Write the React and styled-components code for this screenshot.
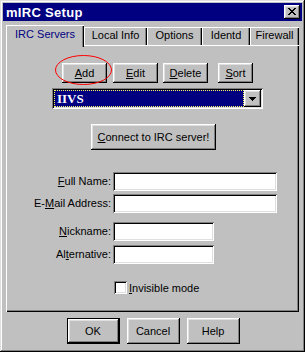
import React from "react";
import styled, { createGlobalStyle } from "styled-components";

const GlobalStyle = createGlobalStyle`
  html, body { margin: 0; padding: 0; background: #c0c0c0; }
  body { font-family: "Liberation Sans", Arial, sans-serif; font-size: 11px; color: #000; }
  * { box-sizing: border-box; }
`;

const raised = `inset -1px -1px 0 #000, inset 1px 1px 0 #fff, inset -2px -2px 0 #808080, inset 2px 2px 0 #dfdfdf`;
const sunken = `inset 1px 1px 0 #808080, inset -1px -1px 0 #fff, inset 2px 2px 0 #000, inset -2px -2px 0 #dfdfdf`;

const Window = styled.div`
  width: 305px;
  height: 352px;
  padding: 3px;
  background: #c0c0c0;
  box-shadow: inset -1px -1px 0 #000, inset 1px 1px 0 #dfdfdf, inset -2px -2px 0 #808080, inset 2px 2px 0 #fff;
  display: flex;
  flex-direction: column;
`;

const TitleBar = styled.div`
  height: 18px;
  background: #000080;
  display: flex;
  align-items: center;
  justify-content: space-between;
  padding: 0 2px 0 3px;
`;

const Title = styled.span`
  color: #fff;
  font-weight: bold;
  font-size: 13px;
  letter-spacing: 0.3px;
`;

const CloseButton = styled.div`
  width: 16px;
  height: 14px;
  background: #c0c0c0;
  box-shadow: ${raised};
  display: flex;
  align-items: center;
  justify-content: center;
  padding-bottom: 1px;
`;

const TabStrip = styled.div`
  display: flex;
  align-items: flex-end;
  height: 20px;
  margin: 4px 3px 0 3px;
  position: relative;
  z-index: 1;
`;

const Tab = styled.div`
  width: ${(p) => p.$w}px;
  height: ${(p) => (p.$active ? 22 : 18)}px;
  margin-bottom: ${(p) => (p.$active ? -2 : 0)}px;
  padding-top: ${(p) => (p.$active ? 3 : 2)}px;
  background: #c0c0c0;
  color: ${(p) => (p.$active ? "#000080" : "#000")};
  text-align: center;
  line-height: 13px;
  white-space: nowrap;
  box-shadow: inset 1px 1px 0 #fff, inset -1px 0 0 #000, inset -2px 0 0 #808080;
`;

const Panel = styled.div`
  margin: 0 3px;
  height: 267px;
  background: #c0c0c0;
  box-shadow: inset 1px 1px 0 #fff, inset -1px -1px 0 #000, inset -2px -2px 0 #808080;
  display: flex;
  flex-direction: column;
  align-items: flex-start;
  padding-top: 18px;
`;

const ButtonRow = styled.div`
  display: flex;
  margin-left: 56px;
  height: 20px;
`;

const Button = styled.button`
  width: ${(p) => p.$w}px;
  height: ${(p) => p.$h || 20}px;
  margin: 0 0 0 ${(p) => p.$gap || 0}px;
  padding: 0;
  border: none;
  background: #c0c0c0;
  box-shadow: ${(p) =>
    p.$default
      ? "inset 0 0 0 1px #000, inset -2px -2px 0 #000, inset 2px 2px 0 #fff, inset -3px -3px 0 #808080, inset 3px 3px 0 #dfdfdf"
      : raised};
  font-family: "Liberation Sans", Arial, sans-serif;
  font-size: 11px;
  color: #000;
  line-height: 13px;
  display: flex;
  align-items: center;
  justify-content: center;
`;

const Marked = styled.span`
  position: relative;
  display: flex;
`;

const Ellipse = styled.svg`
  position: absolute;
  left: -7px;
  top: -8px;
  pointer-events: none;
`;

const Combo = styled.div`
  margin: 5px 0 0 46px;
  width: 211px;
  height: 21px;
  padding: 2px;
  background: #fff;
  box-shadow: ${sunken};
  display: flex;
`;

const ComboValue = styled.div`
  flex: 1;
  background: #000080;
  border: 1px dotted #ffff60;
  color: #fff;
  font-family: "Liberation Serif", "Times New Roman", serif;
  font-weight: bold;
  font-size: 13px;
  line-height: 15px;
  padding-left: 2px;
`;

const ComboArrow = styled.div`
  width: 17px;
  height: 17px;
  background: #c0c0c0;
  box-shadow: ${raised};
  display: flex;
  align-items: center;
  justify-content: center;
`;

const ConnectButton = styled(Button)`
  margin: 15px 0 0 85px;
`;

const Fields = styled.div`
  margin-top: 22px;
  display: flex;
  flex-direction: column;
`;

const FieldRow = styled.div`
  display: flex;
  align-items: center;
  gap: 2px;
  margin-top: ${(p) => p.$mt || 0}px;
`;

const Label = styled.label`
  width: 105px;
  text-align: right;
  white-space: nowrap;
  line-height: 13px;
`;

const Input = styled.div`
  width: ${(p) => p.$w}px;
  height: 19px;
  background: #fff;
  box-shadow: ${sunken};
`;

const CheckRow = styled.div`
  margin: 17px 0 0 108px;
  display: flex;
  align-items: center;
  gap: 2px;
`;

const CheckBox = styled.div`
  width: 13px;
  height: 13px;
  background: #fff;
  box-shadow: ${sunken};
`;

const Footer = styled.div`
  margin-top: 6px;
  display: flex;
  justify-content: center;
  gap: 7px;
  padding-left: 1px;
`;

const CloseGlyph = () => (
  <svg width="8" height="7" viewBox="0 0 8 7" shapeRendering="crispEdges">
    <path
      d="M0 0h2v1H0zM6 0h2v1H6zM1 1h2v1H1zM5 1h2v1H5zM2 2h4v1H2zM3 3h2v1H3zM2 4h4v1H2zM1 5h2v1H1zM5 5h2v1H5zM0 6h2v1H0zM6 6h2v1H6z"
      fill="#000"
    />
  </svg>
);

const ArrowGlyph = () => (
  <svg width="7" height="4" viewBox="0 0 7 4" shapeRendering="crispEdges">
    <path d="M0 0h7v1H0zM1 1h5v1H1zM2 2h3v1H2zM3 3h1v1H3z" fill="#000" />
  </svg>
);

export default function App() {
  return (
    <>
      <GlobalStyle />
      <Window>
        <TitleBar>
          <Title>mIRC Setup</Title>
          <CloseButton>
            <CloseGlyph />
          </CloseButton>
        </TitleBar>
        <TabStrip>
          <Tab $w={78} $active>IRC Servers</Tab>
          <Tab $w={63}>Local Info</Tab>
          <Tab $w={55}>Options</Tab>
          <Tab $w={48}>Identd</Tab>
          <Tab $w={49}>Firewall</Tab>
        </TabStrip>
        <Panel>
          <ButtonRow>
            <Marked>
              <Button $w={45}>
                <span><u>A</u>dd</span>
              </Button>
              <Ellipse width="58" height="31" viewBox="0 0 58 31">
                <ellipse cx="28.5" cy="15" rx="28" ry="14.5" fill="none" stroke="#ff0000" strokeWidth="1" />
              </Ellipse>
            </Marked>
            <Button $w={45} $gap={6}>
              <span><u>E</u>dit</span>
            </Button>
            <Button $w={45} $gap={5}>
              <span><u>D</u>elete</span>
            </Button>
            <Button $w={35} $gap={10}>
              <span><u>S</u>ort</span>
            </Button>
          </ButtonRow>
          <Combo>
            <ComboValue>IIVS</ComboValue>
            <ComboArrow>
              <ArrowGlyph />
            </ComboArrow>
          </Combo>
          <ConnectButton $w={125} $h={26}>
            <span><u>C</u>onnect to IRC server!</span>
          </ConnectButton>
          <Fields>
            <FieldRow>
              <Label><u>F</u>ull Name:</Label>
              <Input $w={164} />
            </FieldRow>
            <FieldRow $mt={3}>
              <Label>E-<u>M</u>ail Address:</Label>
              <Input $w={164} />
            </FieldRow>
            <FieldRow $mt={9}>
              <Label><u>N</u>ickname:</Label>
              <Input $w={101} />
            </FieldRow>
            <FieldRow $mt={4}>
              <Label>Al<u>t</u>ernative:</Label>
              <Input $w={101} />
            </FieldRow>
          </Fields>
          <CheckRow>
            <CheckBox />
            <span><u>I</u>nvisible mode</span>
          </CheckRow>
        </Panel>
        <Footer>
          <Button $w={53} $h={26} $default>OK</Button>
          <Button $w={53} $h={26}>Cancel</Button>
          <Button $w={53} $h={26}>Help</Button>
        </Footer>
      </Window>
    </>
  );
}
